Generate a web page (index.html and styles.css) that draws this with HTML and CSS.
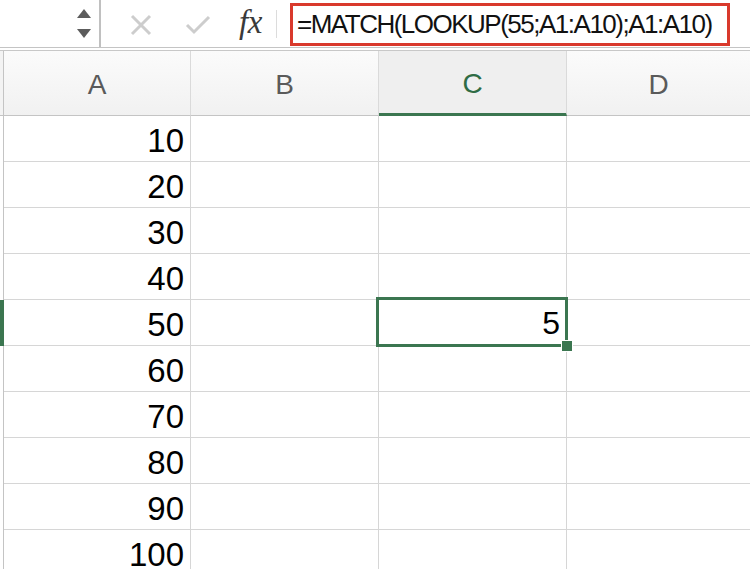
FILE: index.html
```html
<!DOCTYPE html>
<html>
<head>
<meta charset="utf-8">
<link rel="stylesheet" href="styles.css">
</head>
<body>
<div class="app">
  <div class="toolbar">
    <div class="namebox">
      <svg class="stepper" width="16" height="32" viewBox="0 0 16 32">
        <polygon points="8,1 15,10 1,10" fill="#5c5c5c"/>
        <polygon points="1,21 15,21 8,30" fill="#5c5c5c"/>
      </svg>
    </div>
    <div class="divider"></div>
    <div class="actions">
      <svg class="icon-x" width="22" height="22" viewBox="0 0 22 22">
        <path d="M2 2 L20 20 M20 2 L2 20" stroke="#cdcdcd" stroke-width="3" fill="none"/>
      </svg>
      <svg class="icon-check" width="26" height="22" viewBox="0 0 26 22">
        <path d="M2 11 L9 18 L24 3" stroke="#cdcdcd" stroke-width="3" fill="none"/>
      </svg>
      <span class="fx">fx</span>
      <div class="small-divider"></div>
    </div>
    <div class="formula">=MATCH(LOOKUP(55;A1:A10);A1:A10)</div>
  </div>
  <div class="gap"></div>
  <div class="grid">
    <div class="rh hdr"></div>
    <div class="ch">A</div>
    <div class="ch">B</div>
    <div class="ch active">C</div>
    <div class="ch last">D</div>

    <div class="rh"></div><div class="cell num">10</div><div class="cell"></div><div class="cell"></div><div class="cell last"></div>
    <div class="rh"></div><div class="cell num">20</div><div class="cell"></div><div class="cell"></div><div class="cell last"></div>
    <div class="rh"></div><div class="cell num">30</div><div class="cell"></div><div class="cell"></div><div class="cell last"></div>
    <div class="rh"></div><div class="cell num">40</div><div class="cell"></div><div class="cell"></div><div class="cell last"></div>
    <div class="rh sel"></div><div class="cell num">50</div><div class="cell"></div><div class="cell num selected">5<div class="sel-box"><div class="handle"></div></div></div><div class="cell last"></div>
    <div class="rh"></div><div class="cell num">60</div><div class="cell"></div><div class="cell"></div><div class="cell last"></div>
    <div class="rh"></div><div class="cell num">70</div><div class="cell"></div><div class="cell"></div><div class="cell last"></div>
    <div class="rh"></div><div class="cell num">80</div><div class="cell"></div><div class="cell"></div><div class="cell last"></div>
    <div class="rh"></div><div class="cell num">90</div><div class="cell"></div><div class="cell"></div><div class="cell last"></div>
    <div class="rh"></div><div class="cell num">100</div><div class="cell"></div><div class="cell"></div><div class="cell last"></div>
  </div>
</div>
</body>
</html>
```
FILE: styles.css
```css
html, body {
  margin: 0;
  padding: 0;
  background: #ffffff;
}
body {
  width: 750px;
  height: 569px;
  overflow: hidden;
  font-family: "Liberation Sans", Arial, sans-serif;
}
.app {
  width: 750px;
}
.toolbar {
  display: flex;
  align-items: stretch;
  height: 47px;
  border-bottom: 1px solid #c4c4c4;
  background: #ffffff;
}
.namebox {
  width: 99px;
  display: flex;
  align-items: center;
  justify-content: flex-end;
}
.stepper {
  margin-right: 7px;
  margin-top: 1px;
}
.divider {
  width: 2px;
  background: #c0c0c0;
}
.actions {
  display: flex;
  align-items: center;
  width: 189px;
}
.icon-x {
  margin-left: 29px;
  margin-top: 2px;
}
.icon-check {
  margin-left: 33px;
  margin-top: 2px;
}
.fx {
  font-family: "Liberation Serif", "Times New Roman", serif;
  font-style: italic;
  font-size: 33px;
  color: #3a3a3a;
  margin-left: 28px;
  margin-top: -3px;
  letter-spacing: -0.5px;
}
.small-divider {
  width: 1px;
  height: 28px;
  background: #dcdcdc;
  margin-left: 14px;
}
.formula {
  margin-top: 3px;
  height: 37px;
  width: 430px;
  border: 3px solid #d9392c;
  font-size: 26px;
  letter-spacing: -1.5px;
  line-height: 37px;
  padding-left: 4px;
  color: #111;
  white-space: nowrap;
  box-sizing: content-box;
}
.gap {
  height: 2px;
}
.grid {
  display: grid;
  grid-template-columns: 4px 187px 188px 188px 183px;
  grid-auto-rows: 46px;
  grid-template-rows: 65px;
  border-top: 1px solid #c8c8c8;
}
.rh {
  border-right: 1px solid #c4c4c4;
  box-sizing: border-box;
  background: #ffffff;
}
.rh.hdr {
  border-bottom: 1px solid #c4c4c4;
  background: #f3f3f3;
}
.rh.sel {
  background: #3b7650;
  border-right: 1px solid #3b7650;
}
.ch {
  box-sizing: border-box;
  border-right: 1px solid #dadada;
  border-bottom: 1px solid #c4c4c4;
  background: linear-gradient(#fbfbfb, #f1f1f1);
  color: #5a5a5a;
  font-size: 28px;
  display: flex;
  align-items: center;
  justify-content: center;
  padding-top: 3px;
}
.ch.active {
  background: #efefef;
  color: #2f6c45;
  border-bottom: 3px solid #3b7650;
  padding-top: 4px;
}
.ch.last {
  border-right: none;
}
.cell {
  box-sizing: border-box;
  border-right: 1px solid #d6d6d6;
  border-bottom: 1px solid #d6d6d6;
}
.cell.last {
  border-right: none;
}
.num {
  font-size: 33px;
  color: #000;
  text-align: right;
  padding-right: 6px;
  line-height: 46px;
  padding-top: 2px;
}
.selected {
  position: relative;
  z-index: 2;
  font-size: 32px;
  padding-right: 6px;
  padding-top: 0;
}
.sel-box {
  position: absolute;
  left: -3px;
  top: -3px;
  right: -2px;
  bottom: -2px;
  border: 3px solid #3b7650;
}
.handle {
  position: absolute;
  right: -8px;
  bottom: -8px;
  width: 10px;
  height: 10px;
  background: #3b7650;
  border: 1px solid #ffffff;
}
```
